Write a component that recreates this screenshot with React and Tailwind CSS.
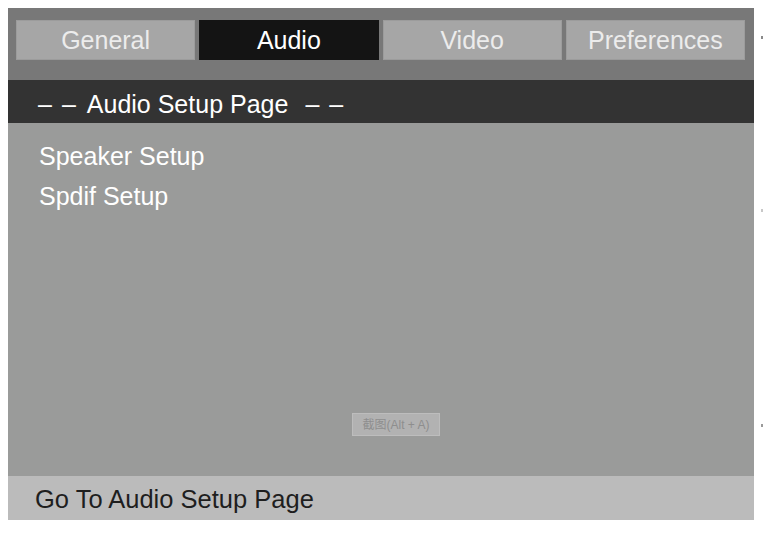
import React from "react";

const tabs = [
  { label: "General", active: false },
  { label: "Audio", active: true },
  { label: "Video", active: false },
  { label: "Preferences", active: false },
];

function Dashes() {
  return (
    <span className="flex items-center gap-[10px]">
      <span>–</span>
      <span>–</span>
    </span>
  );
}

export default function App() {
  return (
    <div
      className="relative w-[763px] h-[534px] bg-white pt-[8px] pl-[8px]"
      style={{ fontFamily: '"Liberation Sans", Arial, sans-serif' }}
    >
      <div className="w-[746px] h-[512px] flex flex-col">
        {/* Tab band */}
        <div className="h-[72px] bg-[#787878] pt-[12px] pl-[8px] pr-[9px]">
          <div className="grid grid-cols-4 gap-[4px] h-[40px]">
            {tabs.map((t) => (
              <div
                key={t.label}
                className={
                  t.active
                    ? "flex items-center justify-center bg-[#141414] text-white text-[25px] leading-none"
                    : "flex items-center justify-center bg-[#a6a6a6] border border-[#9c9c9c] text-[#ececec] text-[25px] leading-none"
                }
              >
                {t.label}
              </div>
            ))}
          </div>
        </div>
        {/* Header */}
        <div className="h-[43px] bg-[#333333] flex items-center pt-[5px] pl-[30px] text-white text-[25px] leading-none">
          <Dashes />
          <span className="ml-[11px]">Audio Setup Page</span>
          <span className="ml-[17px]">
            <Dashes />
          </span>
        </div>
        {/* Content */}
        <div className="relative flex-1 bg-[#9a9b9a] pt-[21px] pl-[31px] text-white text-[25px] leading-none">
          <div className="h-[40px] flex items-start">Speaker Setup</div>
          <div className="h-[40px] flex items-start">Spdif Setup</div>
          <div
            className="absolute left-[344px] top-[290px] w-[88px] h-[23px] bg-[#b2b2b2] border border-[#bdbdbd] flex items-center justify-center text-[#8e8e8e] text-[12px] leading-none"
            style={{ fontFamily: '"Liberation Sans", "Noto Sans CJK SC", sans-serif' }}
          >
            截图(Alt + A)
          </div>
        </div>
        {/* Footer */}
        <div className="h-[44px] bg-[#bbbbbb] flex items-center pt-[3px] pl-[27px] text-[#1e1e1e] text-[25.5px] leading-none">
          Go To Audio Setup Page
        </div>
      </div>
      <div className="absolute left-[761px] top-[36px] w-[2px] h-[3px] bg-[#8a8a8a]" />
      <div className="absolute left-[761px] top-[209px] w-[2px] h-[3px] bg-[#c8c8c8]" />
      <div className="absolute left-[761px] top-[424px] w-[2px] h-[3px] bg-[#9a9a9a]" />
    </div>
  );
}
